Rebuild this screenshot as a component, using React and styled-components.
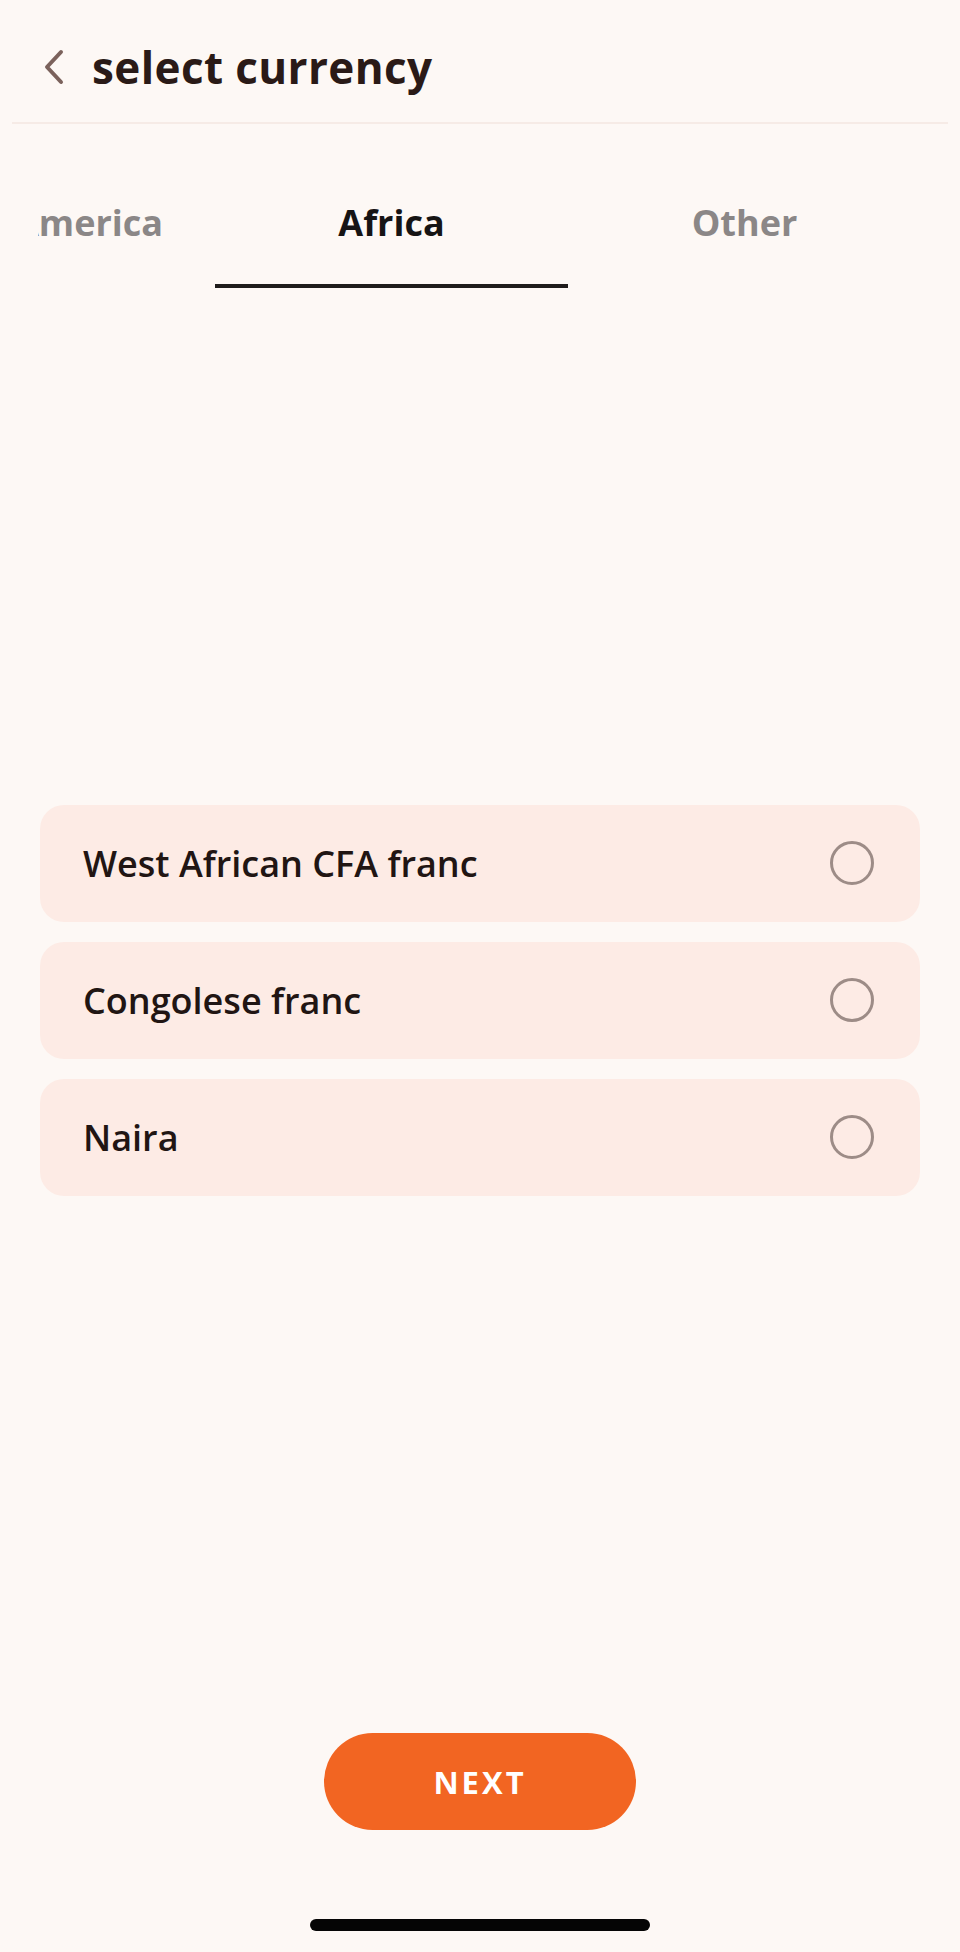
import React, { useState } from 'react';
import styled, { createGlobalStyle } from 'styled-components';

const currencies = ['West African CFA franc', 'Congolese franc', 'Naira'];

const tabs = [
    { label: 'America', width: 213 },
    { label: 'Africa', width: 353 },
    { label: 'Other', width: 353 },
];

export default function App() {
    const [active, setActive] = useState('Africa');
    const [selected, setSelected] = useState(null);

    return (
        <Screen>
            <GlobalStyle />
            <Header>
                <BackButton aria-label="back">
                    <svg width="22" height="36" viewBox="0 0 22 36" fill="none">
                        <path d="M18 3 L4 18 L18 33" stroke="#7b625c" strokeWidth="4" strokeLinecap="round" strokeLinejoin="round" />
                    </svg>
                </BackButton>
                <Title>select currency</Title>
            </Header>

            <TabBar>
                <TabTrack>
                    {tabs.map(tab => (
                        <Tab
                            key={tab.label}
                            $width={tab.width}
                            $active={tab.label === active}
                            $align={tab.label === 'America' ? 'flex-end' : 'center'}
                            onClick={() => setActive(tab.label)}
                        >
                            {tab.label}
                        </Tab>
                    ))}
                </TabTrack>
            </TabBar>

            <Content>
                <List>
                    {currencies.map(name => (
                        <Item key={name} onClick={() => setSelected(name)}>
                            <ItemName>{name}</ItemName>
                            <Radio $checked={selected === name} />
                        </Item>
                    ))}
                </List>
            </Content>

            <Footer>
                <NextButton>NEXT</NextButton>
                <HomeIndicator />
            </Footer>
        </Screen>
    );
}

const GlobalStyle = createGlobalStyle`
    html, body {
        margin: 0;
        padding: 0;
        background: #fdf8f5;
    }
    * {
        box-sizing: border-box;
    }
`

const Screen = styled.div`
    width: 960px;
    height: 1952px;
    display: flex;
    flex-direction: column;
    background: #fdf8f5;
    font-family: "Open Sans", "Noto Sans", sans-serif;
    color: #2a1a17;
    overflow: hidden;
`

const Header = styled.header`
    height: 124px;
    margin: 0 12px;
    display: flex;
    align-items: center;
    gap: 26px;
    padding: 12px 0 0 30px;
    border-bottom: 2px solid #f6ebe6;
`

const BackButton = styled.button`
    width: 24px;
    height: 40px;
    padding: 0;
    border: none;
    background: none;
    display: flex;
    align-items: center;
    justify-content: center;
    cursor: pointer;
`

const Title = styled.h1`
    margin: 0;
    font-size: 44px;
    font-weight: 700;
    letter-spacing: 0.4px;
    color: #2a1a17;
`

const TabBar = styled.nav`
    height: 164px;
    margin-left: 38px;
    overflow: hidden;
`

const TabTrack = styled.div`
    display: flex;
    height: 100%;
    margin-left: -36px;
`

const Tab = styled.button`
    flex: 0 0 ${p => p.$width}px;
    height: 100%;
    display: flex;
    align-items: flex-start;
    justify-content: ${p => p.$align};
    padding: 74px ${p => (p.$align === 'flex-end' ? '52px' : '0')} 0 0;
    border: none;
    background: none;
    border-bottom: 4px solid ${p => (p.$active ? '#1f1c1b' : 'transparent')};
    font-family: inherit;
    font-size: 36px;
    font-weight: 700;
    color: ${p => (p.$active ? '#161414' : '#8b8787')};
    white-space: nowrap;
    cursor: pointer;
`

const Content = styled.main`
    flex: 1;
    display: flex;
    flex-direction: column;
    justify-content: center;
    padding: 0 40px;
`

const List = styled.ul`
    list-style: none;
    margin: 0;
    padding: 0;
    display: flex;
    flex-direction: column;
    gap: 20px;
`

const Item = styled.li`
    height: 117px;
    display: flex;
    align-items: center;
    justify-content: space-between;
    padding: 0 46px 0 43px;
    background: #fdebe5;
    border-radius: 24px;
    cursor: pointer;
`

const ItemName = styled.span`
    font-size: 36px;
    font-weight: 600;
    color: #211513;
`

const Radio = styled.span`
    width: 44px;
    height: 44px;
    border-radius: 50%;
    border: 3px solid ${p => (p.$checked ? '#f26522' : '#9d8c87')};
    background: ${p => (p.$checked ? 'radial-gradient(circle, #f26522 45%, transparent 48%)' : 'none')};
`

const Footer = styled.footer`
    display: flex;
    flex-direction: column;
    align-items: center;
    padding: 21px 0 21px;
`

const NextButton = styled.button`
    width: 312px;
    height: 97px;
    border: none;
    border-radius: 49px;
    background: #f26522;
    color: #ffffff;
    font-family: "Open Sans", "Noto Sans", sans-serif;
    font-size: 31px;
    font-weight: 700;
    letter-spacing: 3px;
    cursor: pointer;
`

const HomeIndicator = styled.div`
    width: 340px;
    height: 12px;
    margin-top: 89px;
    border-radius: 6px;
    background: #050505;
`
